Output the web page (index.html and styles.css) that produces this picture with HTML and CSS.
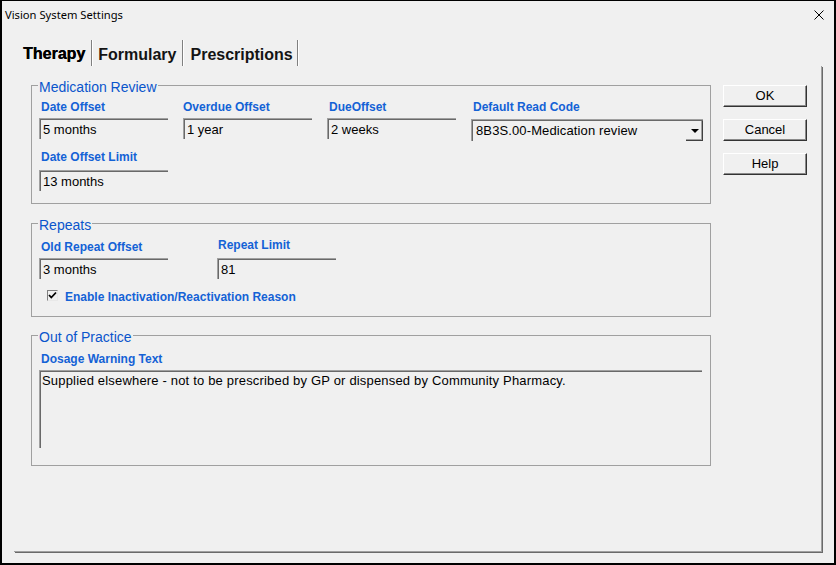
FILE: index.html
```html
<!DOCTYPE html>
<html lang="en">
<head>
<meta charset="utf-8">
<title>Vision System Settings</title>
<link rel="stylesheet" href="styles.css">
</head>
<body>
<div class="window">
  <div class="titlebar">
    <span class="title">Vision System Settings</span>
    <svg class="close" width="10" height="10" viewBox="0 0 10 10"><path d="M0.5 0.5 L9.5 9.5 M9.5 0.5 L0.5 9.5" stroke="#000" stroke-width="1" fill="none"/></svg>
  </div>
  <div class="tabs">
    <span class="tab tab-active">Therapy</span>
    <span class="tab-sep"></span>
    <span class="tab tab-mid">Formulary</span>
    <span class="tab-sep"></span>
    <span class="tab tab-last">Prescriptions</span>
    <span class="tab-sep"></span>
  </div>
  <div class="panel">
    <div class="groups">
      <fieldset class="group group-med">
        <legend>Medication Review</legend>
        <div class="grid">
          <div class="field">
            <label class="lbl">Date Offset</label>
            <div class="edit">5 months</div>
          </div>
          <div class="field">
            <label class="lbl lbl-flush">Overdue Offset</label>
            <div class="edit">1 year</div>
          </div>
          <div class="field">
            <label class="lbl">DueOffset</label>
            <div class="edit">2 weeks</div>
          </div>
          <div class="field">
            <label class="lbl">Default Read Code</label>
            <div class="combo">
              <span class="combo-text">8B3S.00-Medication review</span>
              <span class="combo-btn"><span class="arrow"></span></span>
            </div>
          </div>
        </div>
        <div class="field field-row2">
          <label class="lbl">Date Offset Limit</label>
          <div class="edit edit-row2">13 months</div>
        </div>
      </fieldset>

      <fieldset class="group group-rep">
        <legend>Repeats</legend>
        <div class="rep-row">
          <div class="field rep-col1">
            <label class="lbl">Old Repeat Offset</label>
            <div class="edit">3 months</div>
          </div>
          <div class="field rep-col2">
            <label class="lbl lbl-up">Repeat Limit</label>
            <div class="edit edit-limit">81</div>
          </div>
        </div>
        <div class="check-row">
          <span class="checkbox">
            <svg width="9" height="9" viewBox="0 0 9 9"><path d="M1 4 L3.3 6.5 L8 1.5" stroke="#000" stroke-width="1.8" fill="none"/></svg>
          </span>
          <span class="lbl check-lbl">Enable Inactivation/Reactivation Reason</span>
        </div>
      </fieldset>

      <fieldset class="group group-oop">
        <legend>Out of Practice</legend>
        <label class="lbl">Dosage Warning Text</label>
        <div class="memo">Supplied elsewhere - not to be prescribed by GP or dispensed by Community Pharmacy.</div>
      </fieldset>
    </div>
    <div class="buttons">
      <div class="btn">OK</div>
      <div class="btn">Cancel</div>
      <div class="btn">Help</div>
    </div>
  </div>
</div>
</body>
</html>
```
FILE: styles.css
```css
html, body {
  margin: 0;
  padding: 0;
  background: #000;
}

.window {
  width: 836px;
  height: 565px;
  box-sizing: border-box;
  border-top: 1px solid #000;
  border-left: 2px solid #000;
  border-right: 2px solid #000;
  border-bottom: 2px solid #000;
  background: #f0f0f0;
  font-family: "Liberation Sans", Arial, sans-serif;
  color: #000;
  overflow: hidden;
}

.titlebar {
  height: 27px;
  display: flex;
  align-items: center;
  justify-content: space-between;
  padding: 0 10px 0 3px;
}

.title {
  font-family: "Noto Sans", sans-serif;
  font-size: 11.2px;
  line-height: 14px;
  color: #000;
  margin-top: 1px;
}

.close {
  display: block;
  margin-top: 1px;
}

.tabs {
  height: 38px;
  display: flex;
  align-items: flex-end;
  padding-left: 21px;
}

.tab {
  font-weight: bold;
  font-size: 16px;
  line-height: 20px;
  padding: 0 6px 1px 5px;
  color: #141414;
}

.tab-active {
  padding-left: 0;
  color: #000;
  padding-bottom: 2px;
  text-shadow: 0.3px 0 0 #000;
}

.tab-mid {
  padding: 0 5px 1px 5px;
}

.tab-last {
  padding: 0 4px 1px 7px;
}

.tab-sep {
  width: 1px;
  height: 26px;
  background: #808080;
  border-right: 1px solid #ffffff;
}

.panel {
  margin-left: 12px;
  width: 790px;
  height: 485px;
  border-right: 1px solid #a0a0a0;
  border-bottom: 1px solid #a0a0a0;
  box-shadow: 1px 1px 0 #6a6a6a;
  display: flex;
  align-items: flex-start;
  padding-left: 17px;
  box-sizing: content-box;
}

.groups {
  width: 680px;
  margin-top: 10px;
  display: flex;
  flex-direction: column;
}

.group {
  margin: 0;
  border: 1px solid #a0a0a0;
  padding: 5px 7px 12px 7px;
  min-width: 0;
}

.group legend {
  font-size: 14px;
  line-height: 16px;
  padding: 3px 1px 0 1px;
  color: #0a55cc;
  margin-left: -1px;
}

.group-rep {
  margin-top: 10px;
  padding-top: 7px;
  padding-bottom: 12px;
}

.group-oop {
  margin-top: 9px;
  padding-top: 7px;
  padding-bottom: 17px;
}

.lbl {
  display: block;
  font-size: 12px;
  line-height: 14px;
  font-weight: bold;
  color: #1462d6;
  padding-left: 2px;
}

.lbl-flush {
  padding-left: 0;
}

.grid {
  display: grid;
  grid-template-columns: 144px 144px 144px 232px;
}

.field .edit {
  margin-top: 4px;
}

.edit {
  width: 129px;
  height: 21px;
  box-sizing: border-box;
  border-top: 1px solid #a0a0a0;
  border-left: 1px solid #a0a0a0;
  box-shadow: inset 1px 1px 0 #696969;
  padding: 1px 0 0 3px;
  font-size: 13px;
  line-height: 19px;
  white-space: nowrap;
}

.field-row2 {
  margin-top: 9px;
}

.field-row2 .edit-row2 {
  margin-top: 6px;
}

.combo {
  margin-top: 5px;
  width: 232px;
  height: 22px;
  box-sizing: border-box;
  border-top: 1px solid #a0a0a0;
  border-left: 1px solid #a0a0a0;
  box-shadow: inset 1px 1px 0 #696969;
  display: flex;
  align-items: stretch;
  padding: 1px 0 0 4px;
  font-size: 13px;
}

.combo-text {
  flex: 1;
  line-height: 19px;
  white-space: nowrap;
  letter-spacing: 0.12px;
}

.combo-btn {
  width: 17px;
  box-sizing: border-box;
  border-right: 1px solid #404040;
  border-bottom: 1px solid #404040;
  box-shadow: inset -1px -1px 0 #a0a0a0;
  display: flex;
  align-items: center;
  justify-content: center;
  padding-left: 1px;
}

.arrow {
  width: 0;
  height: 0;
  border-left: 4px solid transparent;
  border-right: 4px solid transparent;
  border-top: 4px solid #000;
}

.rep-row {
  display: flex;
}

.rep-col1 {
  width: 178px;
}

.rep-col1 .edit {
  margin-top: 4px;
}

.lbl-up {
  margin-top: -2px;
  padding-left: 1px;
}

.rep-col2 .edit {
  margin-top: 6px;
}

.edit-limit {
  width: 119px;
}

.check-row {
  display: flex;
  align-items: flex-start;
  margin-top: 11px;
  padding-left: 8px;
}

.checkbox {
  width: 11px;
  height: 11px;
  box-sizing: border-box;
  border-top: 1px solid #808080;
  border-left: 1px solid #808080;
  border-right: 1px solid #e8e8e8;
  border-bottom: 1px solid #e8e8e8;
  display: flex;
  align-items: center;
  justify-content: center;
}

.checkbox svg {
  display: block;
}

.check-lbl {
  margin-left: 7px;
  padding-left: 0;
}

.memo {
  margin-top: 4px;
  width: 663px;
  height: 78px;
  box-sizing: border-box;
  border-top: 1px solid #a0a0a0;
  border-left: 1px solid #a0a0a0;
  box-shadow: inset 1px 1px 0 #696969;
  padding: 2px 0 0 2px;
  font-size: 13px;
  line-height: 16px;
  letter-spacing: 0.18px;
}

.buttons {
  margin-top: 19px;
  margin-left: 12px;
  display: flex;
  flex-direction: column;
  gap: 12px;
}

.btn {
  width: 84px;
  height: 22px;
  box-sizing: border-box;
  border-top: 1px solid #ffffff;
  border-left: 1px solid #ffffff;
  border-right: 1px solid #333;
  border-bottom: 1px solid #333;
  box-shadow: inset -1px -1px 0 #8a8a8a;
  display: flex;
  align-items: center;
  justify-content: center;
  font-size: 13px;
  line-height: 16px;
  color: #000;
}
```
